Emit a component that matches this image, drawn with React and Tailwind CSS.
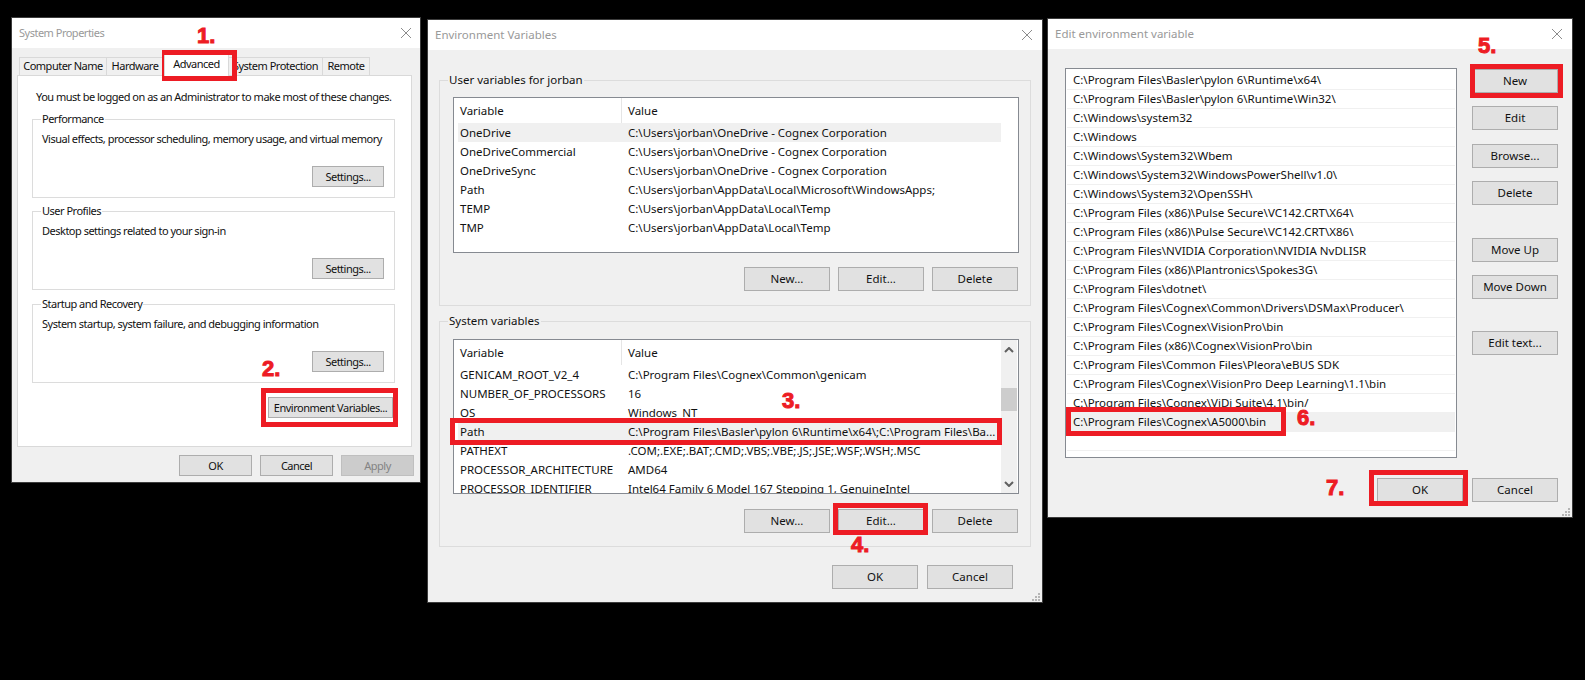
import React from 'react';

const userRows = [
  ['OneDrive', 'C:\\Users\\jorban\\OneDrive - Cognex Corporation'],
  ['OneDriveCommercial', 'C:\\Users\\jorban\\OneDrive - Cognex Corporation'],
  ['OneDriveSync', 'C:\\Users\\jorban\\OneDrive - Cognex Corporation'],
  ['Path', 'C:\\Users\\jorban\\AppData\\Local\\Microsoft\\WindowsApps;'],
  ['TEMP', 'C:\\Users\\jorban\\AppData\\Local\\Temp'],
  ['TMP', 'C:\\Users\\jorban\\AppData\\Local\\Temp'],
];

const systemRows = [
  ['GENICAM_ROOT_V2_4', 'C:\\Program Files\\Cognex\\Common\\genicam'],
  ['NUMBER_OF_PROCESSORS', '16'],
  ['OS', 'Windows_NT'],
  ['Path', 'C:\\Program Files\\Basler\\pylon 6\\Runtime\\x64\\;C:\\Program Files\\Ba...'],
  ['PATHEXT', '.COM;.EXE;.BAT;.CMD;.VBS;.VBE;.JS;.JSE;.WSF;.WSH;.MSC'],
  ['PROCESSOR_ARCHITECTURE', 'AMD64'],
  ['PROCESSOR_IDENTIFIER', 'Intel64 Family 6 Model 167 Stepping 1, GenuineIntel'],
];

const pathRows = [
  'C:\\Program Files\\Basler\\pylon 6\\Runtime\\x64\\',
  'C:\\Program Files\\Basler\\pylon 6\\Runtime\\Win32\\',
  'C:\\Windows\\system32',
  'C:\\Windows',
  'C:\\Windows\\System32\\Wbem',
  'C:\\Windows\\System32\\WindowsPowerShell\\v1.0\\',
  'C:\\Windows\\System32\\OpenSSH\\',
  'C:\\Program Files (x86)\\Pulse Secure\\VC142.CRT\\X64\\',
  'C:\\Program Files (x86)\\Pulse Secure\\VC142.CRT\\X86\\',
  'C:\\Program Files\\NVIDIA Corporation\\NVIDIA NvDLISR',
  'C:\\Program Files (x86)\\Plantronics\\Spokes3G\\',
  'C:\\Program Files\\dotnet\\',
  'C:\\Program Files\\Cognex\\Common\\Drivers\\DSMax\\Producer\\',
  'C:\\Program Files\\Cognex\\VisionPro\\bin',
  'C:\\Program Files (x86)\\Cognex\\VisionPro\\bin',
  'C:\\Program Files\\Common Files\\Pleora\\eBUS SDK',
  'C:\\Program Files\\Cognex\\VisionPro Deep Learning\\1.1\\bin',
  'C:\\Program Files\\Cognex\\ViDi Suite\\4.1\\bin/',
  'C:\\Program Files\\Cognex\\A5000\\bin',
  '',
];

function Btn({ children, className = 'w-[86px] h-[24px]', disabled }) {
  return (
    <button
      className={`${className} shrink-0 border leading-none whitespace-nowrap flex items-center justify-center ${
        disabled ? 'bg-[#cccccc] border-[#bfbfbf] text-[#838383]' : 'bg-[#e1e1e1] border-[#adadad] text-[#111]'
      }`}
    >
      {children}
    </button>
  );
}

function Grip() {
  return (
    <svg className="absolute right-[2px] bottom-[1px]" width="9" height="9" viewBox="0 0 9 9" fill="#b4b4b4">
      <rect x="7" y="1" width="2" height="2" />
      <rect x="4" y="4" width="2" height="2" />
      <rect x="7" y="4" width="2" height="2" />
      <rect x="1" y="7" width="2" height="2" />
      <rect x="4" y="7" width="2" height="2" />
      <rect x="7" y="7" width="2" height="2" />
    </svg>
  );
}

function Window({ title, className, titlePad, children, grip }) {
  return (
    <div className={`absolute flex flex-col border border-[#3c3c3c] bg-[#f0f0f0] text-[#111] ${className}`}>
      <div className={`h-[30px] shrink-0 bg-white flex items-center justify-between text-[#999] ${titlePad}`}>
        <span>{title}</span>
        <svg width="12" height="12" viewBox="0 0 12 12" stroke="#8c8c8c" strokeWidth="1">
          <path d="M1 1 L11 11 M11 1 L1 11" />
        </svg>
      </div>
      {children}
      {grip && <Grip />}
    </div>
  );
}

function Group({ legend, className, children }) {
  return (
    <fieldset className={`min-w-0 border border-[#dcdcdc] ${className}`}>
      <legend className="ml-[8px] px-[1px] h-[16px] leading-[16px] whitespace-nowrap">{legend}</legend>
      {children}
    </fieldset>
  );
}

function SettingsGroup({ legend, text, className }) {
  return (
    <Group legend={legend} className={`h-[87px] ${className}`}>
      <p className="pl-[9px] pt-[4px] h-[20px] leading-[16px] whitespace-nowrap">{text}</p>
      <div className="flex justify-end pr-[10px] mt-[19px]">
        <Btn className="w-[72px] h-[21px]">Settings...</Btn>
      </div>
    </Group>
  );
}

function Tab({ label, className }) {
  return (
    <div className={`h-[18px] border border-b-0 border-[#d9d9d9] flex items-center justify-center whitespace-nowrap ${className}`}>
      {label}
    </div>
  );
}

function SystemProperties() {
  return (
    <Window
      title="System Properties"
      className="left-[11px] top-[17px] w-[410px] h-[466px] text-[11px] tracking-[-0.5px]"
      titlePad="pl-[7px] pr-[8px]"
    >
      <div className="flex-1 px-[5px] pt-[9px]">
        <div className="relative flex pl-[2px] h-[18px]">
          <Tab label="Computer Name" className="w-[88px]" />
          <Tab label="Hardware" className="w-[57px] border-l-0" />
          <div className="w-[65px] h-[21px] -mt-[2px] z-10 bg-white border-x border-[#d9d9d9] flex items-start justify-center pt-[1px]">
            Advanced
          </div>
          <Tab label="System Protection" className="w-[94px] border-l-0" />
          <Tab label="Remote" className="w-[47px] border-l-0" />
        </div>
        <div className="w-[395px] h-[372px] bg-white border border-[#d9d9d9] pl-[14px] pr-[16px] pt-[13px]">
          <p className="pl-[4px] h-[16px] leading-[16px] whitespace-nowrap">
            You must be logged on as an Administrator to make most of these changes.
          </p>
          <SettingsGroup
            legend="Performance"
            text="Visual effects, processor scheduling, memory usage, and virtual memory"
            className="mt-[6px]"
          />
          <SettingsGroup legend="User Profiles" text="Desktop settings related to your sign-in" className="mt-[5px]" />
          <SettingsGroup
            legend="Startup and Recovery"
            text="System startup, system failure, and debugging information"
            className="mt-[6px]"
          />
          <div className="flex justify-end pr-[2px] mt-[14px]">
            <Btn className="w-[125px] h-[21px]">Environment Variables...</Btn>
          </div>
        </div>
        <div className="flex justify-end gap-[8px] mt-[8px] pr-[1px]">
          <Btn className="w-[73px] h-[21px]">OK</Btn>
          <Btn className="w-[73px] h-[21px]">Cancel</Btn>
          <Btn className="w-[73px] h-[21px]" disabled>Apply</Btn>
        </div>
      </div>
    </Window>
  );
}

function Scrollbar() {
  return (
    <div className="w-[16px] h-full shrink-0 bg-[#f0f0f0] mr-[1px] flex flex-col items-center">
      <svg className="mt-[7px] shrink-0" width="10" height="6" viewBox="0 0 10 6" fill="none" stroke="#606060" strokeWidth="2">
        <path d="M1 5 L5 1 L9 5" />
      </svg>
      <div className="w-full h-[23px] mt-[35px] bg-[#cdcdcd]" />
      <svg className="mt-[70px] shrink-0" width="10" height="6" viewBox="0 0 10 6" fill="none" stroke="#606060" strokeWidth="2">
        <path d="M1 1 L5 5 L9 1" />
      </svg>
    </div>
  );
}

function VarList({ rows, selected, scroll }) {
  return (
    <div className={`ml-[13px] mr-[11px] border border-[#868a91] bg-white flex overflow-hidden ${scroll ? 'h-[155px] mt-[10px]' : 'h-[156px] mt-[9px]'}`}>
      <div className="w-[547px] shrink-0 pl-[4px]">
        <div className="h-[25px] flex leading-[25px]">
          <div className="w-[164px] pl-[2px] border-r border-[#e5e5e5]">Variable</div>
          <div className="flex-1 pl-[6px]">Value</div>
        </div>
        {rows.map(([name, value], i) => (
          <div
            key={name}
            className={`h-[19px] flex leading-[19px] whitespace-nowrap ${i === selected ? 'bg-[#f0f0f0]' : ''}`}
          >
            <div className="w-[164px] pl-[2px]">{name}</div>
            <div className="flex-1 pl-[6px]">{value}</div>
          </div>
        ))}
      </div>
      {scroll && <Scrollbar />}
    </div>
  );
}

function VarButtons({ className }) {
  return (
    <div className={`flex justify-end gap-[8px] pr-[12px] ${className}`}>
      <Btn>New...</Btn>
      <Btn>Edit...</Btn>
      <Btn>Delete</Btn>
    </div>
  );
}

function EnvironmentVariables() {
  return (
    <Window title="Environment Variables" className="left-[427px] top-[19px] w-[616px] h-[584px] text-[11.5px]" titlePad="pl-[7px] pr-[9px]" grip>
      <div className="flex-1 px-[11px] pt-[22px]">
        <Group legend="User variables for jorban" className="h-[234px]">
          <VarList rows={userRows} selected={0} />
          <VarButtons className="mt-[14px]" />
        </Group>
        <Group legend="System variables" className="h-[234px] mt-[7px]">
          <VarList rows={systemRows} selected={3} scroll />
          <VarButtons className="mt-[15px]" />
        </Group>
        <div className="flex justify-end gap-[9px] mt-[18px] pr-[18px]">
          <Btn>OK</Btn>
          <Btn>Cancel</Btn>
        </div>
      </div>
    </Window>
  );
}

function EditVariable() {
  return (
    <Window title="Edit environment variable" className="left-[1047px] top-[18px] w-[526px] h-[500px] text-[11.5px]" titlePad="pl-[7px] pr-[9px]" grip>
      <div className="flex-1 pl-[17px] pt-[19px] pr-[14px]">
        <div className="flex gap-[15px]">
          <div className="w-[392px] h-[390px] border border-[#868a91] bg-white pt-[2px] pl-[1px] pr-[1px]">
            {pathRows.map((row, i) => (
              <div
                key={i}
                className={`h-[19px] pl-[6px] leading-[18px] border-b border-[#f0f0f0] whitespace-nowrap ${i === 18 ? 'bg-[#f0f0f0]' : ''}`}
              >
                {row}
              </div>
            ))}
          </div>
          <div className="flex flex-col pt-[1px]">
            <Btn>New</Btn>
            <div className="mt-[13px]"><Btn>Edit</Btn></div>
            <div className="mt-[14px]"><Btn>Browse...</Btn></div>
            <div className="mt-[13px]"><Btn>Delete</Btn></div>
            <div className="mt-[33px]"><Btn>Move Up</Btn></div>
            <div className="mt-[13px]"><Btn>Move Down</Btn></div>
            <div className="mt-[32px]"><Btn>Edit text...</Btn></div>
          </div>
        </div>
        <div className="flex justify-end gap-[9px] mt-[20px]">
          <Btn>OK</Btn>
          <Btn>Cancel</Btn>
        </div>
      </div>
    </Window>
  );
}

// red annotations sit on top of the dialogs
function Box({ className }) {
  return <div className={`absolute border-[5px] border-[#ed1c24] pointer-events-none ${className}`} />;
}

function Num({ children, className }) {
  return (
    <span className={`absolute text-[22px] leading-none font-bold text-[#ed1c24] [-webkit-text-stroke:1px_#ed1c24] font-['Liberation_Sans',sans-serif] ${className}`}>
      {children}
    </span>
  );
}

export default function App() {
  return (
    <div className="relative w-[1585px] h-[680px] bg-black overflow-hidden font-['Noto_Sans',sans-serif]">
      <SystemProperties />
      <EnvironmentVariables />
      <EditVariable />

      <Box className="left-[162px] top-[50px] w-[75px] h-[31px]" />
      <Box className="left-[261px] top-[388px] w-[137px] h-[39px]" />
      <Box className="left-[450px] top-[418px] w-[552px] h-[27px]" />
      <Box className="left-[833px] top-[503px] w-[95px] h-[32px]" />
      <Box className="left-[1470px] top-[64px] w-[93px] h-[34px]" />
      <Box className="left-[1066px] top-[407px] w-[220px] h-[29px]" />
      <Box className="left-[1369px] top-[470px] w-[99px] h-[36px]" />

      <Num className="left-[197px] top-[25px]">1.</Num>
      <Num className="left-[262px] top-[358px]">2.</Num>
      <Num className="left-[782px] top-[390px]">3.</Num>
      <Num className="left-[851px] top-[534px]">4.</Num>
      <Num className="left-[1478px] top-[35px]">5.</Num>
      <Num className="left-[1297px] top-[407px]">6.</Num>
      <Num className="left-[1326px] top-[477px]">7.</Num>
    </div>
  );
}
